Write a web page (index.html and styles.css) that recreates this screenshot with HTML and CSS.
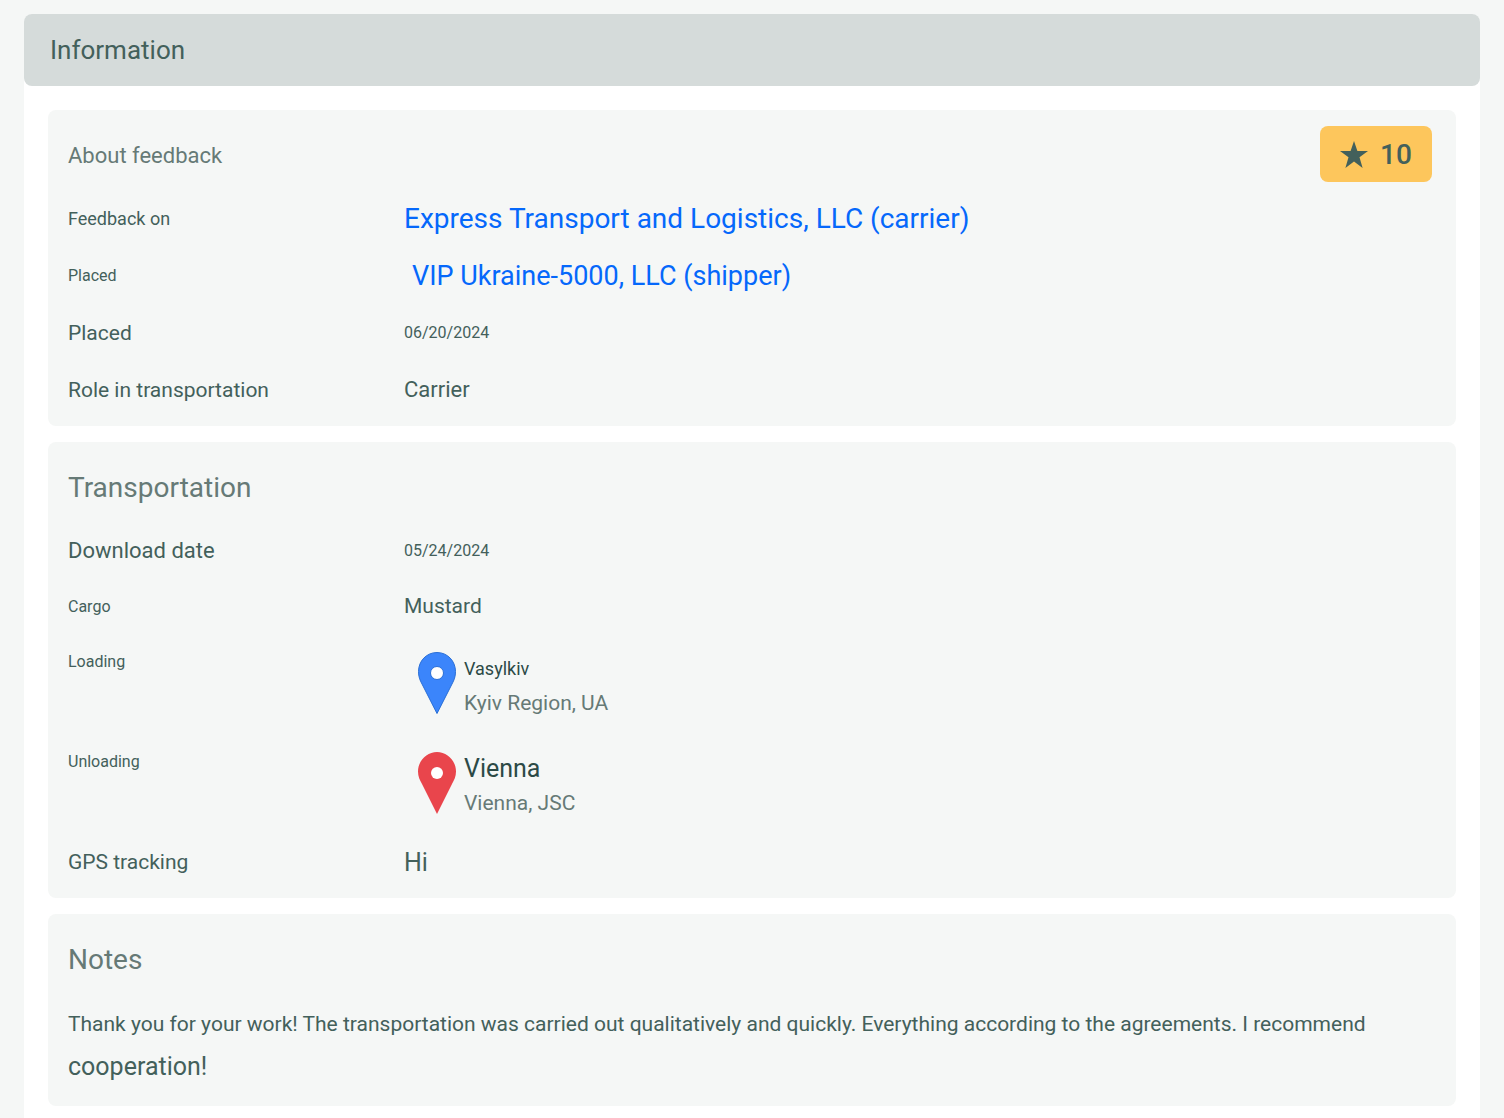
FILE: index.html
```html
<!DOCTYPE html>
<html lang="en">
<head>
  <meta charset="utf-8">
  <meta name="viewport" content="width=device-width, initial-scale=1">
  <title>Information</title>
  <link rel="stylesheet" href="styles.css">
</head>
<body>
  <main class="panel">
    <h1 class="panel-title">Information</h1>

    <div class="panel-body">
      <section class="card">
        <header class="card-header">
          <h2 class="card-title text-l">About feedback</h2>
          <div class="rating">
            <svg class="rating-star" viewBox="0 0 28 27" aria-hidden="true">
              <path d="M14 0l3.4 9.9H28l-8.5 6.3L22.6 27 14 20.6 5.4 27l3.1-10.8L0 9.9h10.6z"/>
            </svg>
            <span>10</span>
          </div>
        </header>
        <dl class="rows rows-roomy">
          <div class="row">
            <dt class="text-s">Feedback on</dt>
            <dd><a class="link text-xxl" href="#">Express Transport and Logistics, LLC (carrier)</a></dd>
          </div>
          <div class="row">
            <dt class="text-xs">Placed</dt>
            <dd class="inset"><a class="link link-secondary" href="#">VIP Ukraine-5000, LLC (shipper)</a></dd>
          </div>
          <div class="row">
            <dt class="text-m">Placed</dt>
            <dd class="text-xs">06/20/2024</dd>
          </div>
          <div class="row">
            <dt class="text-m">Role in transportation</dt>
            <dd class="text-l">Carrier</dd>
          </div>
        </dl>
      </section>

      <section class="card">
        <header class="card-header">
          <h2 class="card-title text-xxl">Transportation</h2>
        </header>
        <dl class="rows">
          <div class="row">
            <dt class="text-l">Download date</dt>
            <dd class="text-xs">05/24/2024</dd>
          </div>
          <div class="row">
            <dt class="text-xs">Cargo</dt>
            <dd class="text-m">Mustard</dd>
          </div>
          <div class="row row-place">
            <dt class="text-xs">Loading</dt>
            <dd class="place">
              <svg class="pin pin-loading" viewBox="0 0 38 62" aria-hidden="true">
                <path d="M19 .5C8.500.5.5 9 .5 19.500c0 5 1.300 8.500 3.500 12.500L19 61.500 34 32c2.200-4 3.500-7.500 3.500-12.500C37.500 9 29.500.5 19 .5z"/>
                <circle class="pin-hole" cx="19" cy="21" r="6.500"/>
              </svg>
              <div>
                <div class="place-name text-s">Vasylkiv</div>
                <div class="place-region text-m">Kyiv Region, UA</div>
              </div>
            </dd>
          </div>
          <div class="row row-place">
            <dt class="text-xs">Unloading</dt>
            <dd class="place">
              <svg class="pin pin-unloading" viewBox="0 0 38 62" aria-hidden="true">
                <path d="M19 0C8.500 0 0 9 0 19.500c0 5 1.800 8.500 4 12.500l15 30 15-30c2.200-4 4-7.500 4-12.500C38 9 29.500 0 19 0z"/>
                <circle class="pin-hole" cx="19" cy="21" r="6"/>
              </svg>
              <div>
                <div class="place-name text-xl">Vienna</div>
                <div class="place-region text-m">Vienna, JSC</div>
              </div>
            </dd>
          </div>
          <div class="row">
            <dt class="text-m">GPS tracking</dt>
            <dd class="text-xl">Hi</dd>
          </div>
        </dl>
      </section>

      <section class="card">
        <header class="card-header">
          <h2 class="card-title text-xxl">Notes</h2>
        </header>
        <p class="note text-m">Thank you for your work! The transportation was carried out qualitatively and quickly. Everything according to the agreements. I recommend <span class="note-end text-xl">cooperation!</span></p>
      </section>
    </div>
  </main>
</body>
</html>
```
FILE: styles.css
```css
:root {
  --page: #f5f7f6;
  --header: #d5dbda;
  --ink: #43605b;
  --ink-strong: #2c4a46;
  --muted: #667a76;
  --link: #0568fb;
  --rating: #fdc65c;
}

* {
  box-sizing: border-box;
}

body {
  margin: 0;
  padding: 14px 24px 0;
  background: var(--page);
  color: var(--ink);
  font-family: Roboto, "Noto Sans", sans-serif;
  font-weight: 400;
}

h1, h2, p, dl, dd {
  margin: 0;
  font-weight: inherit;
}

.text-xs { font-size: 16px; }
.text-s { font-size: 18px; }
.text-m { font-size: 21px; }
.text-l { font-size: 22px; }
.text-xl { font-size: 25px; }
.text-xxl { font-size: 28px; }

.panel {
  background: #fff;
  border-radius: 8px 8px 0 0;
}

.panel-title {
  padding: 0 26px;
  border-radius: 8px;
  background: var(--header);
  font-size: 26px;
  line-height: 72px;
}

.panel-body {
  display: flex;
  flex-direction: column;
  gap: 16px;
  padding: 24px 24px 12px;
}

.card {
  padding: 16px 24px 8px 20px;
  border-radius: 8px;
  background: var(--page);
}

.card-header {
  display: flex;
  justify-content: space-between;
  margin-bottom: 4px;
}

.card-title {
  color: var(--muted);
  line-height: 60px;
}

.rating {
  display: flex;
  align-items: center;
  justify-content: center;
  gap: 12px;
  width: 112px;
  height: 56px;
  border-radius: 8px;
  background: var(--rating);
  font-size: 28px;
  font-weight: 500;
}

.rating-star {
  width: 28px;
  height: 27px;
  fill: var(--ink);
}

.row {
  display: grid;
  grid-template-columns: 336px 1fr;
  align-items: center;
  min-height: 56px;
}

.rows-roomy .row {
  min-height: 57px;
}

.link {
  color: var(--link);
  text-decoration: none;
}

.link-secondary {
  font-size: 27px;
}

.inset {
  padding-left: 8px;
}

.row-place {
  align-items: start;
  min-height: 100px;
  padding-top: 18px;
}

.row-place dt {
  line-height: 20px;
}

.place {
  display: flex;
  gap: 8px;
  padding-left: 14px;
  line-height: 34px;
}

.pin {
  flex: none;
  width: 38px;
  height: 62px;
}

.pin-loading {
  fill: #3b85fb;
  stroke: #2a6fd6;
}

.pin-unloading {
  fill: #e9454c;
}

.pin-hole {
  fill: #fff;
}

.place-name {
  color: var(--ink-strong);
}

.place-region {
  color: var(--muted);
}

.note {
  padding: 8px 0;
  line-height: 44px;
}

.note-end {
  line-height: 1;
}
```
